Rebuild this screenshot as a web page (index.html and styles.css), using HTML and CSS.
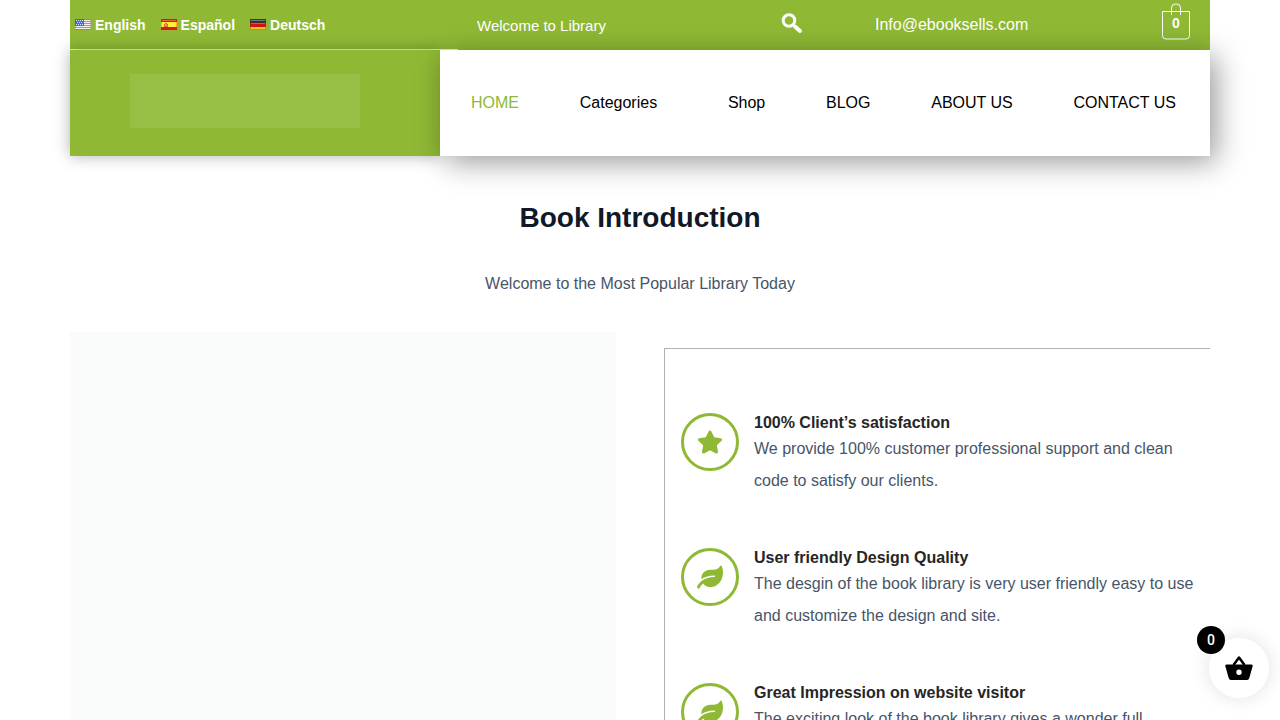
FILE: index.html
```html
<!DOCTYPE html>
<html lang="en">
<head>
<meta charset="utf-8">
<meta name="viewport" content="width=device-width, initial-scale=1">
<title>Book Library</title>
<link rel="stylesheet" href="styles.css">
</head>
<body>
<div class="container">
  <header>
    <div class="topbar">
      <div class="languages">
        <a href="#"><svg class="flag" viewBox="0 0 16 11" aria-hidden="true"><path fill="#f6f0f0" d="M0 0h16v11H0z"/><path stroke="#e57c7c" d="M0 .5h16M0 2.500h16M0 4.500h16M0 6.500h16M0 8.500h16M0 10.500h16"/><path fill="#3e6fd8" d="M0 0h9v7H0z"/><path stroke="#dbe6ff" stroke-dasharray="1 1" d="M1 1.500h7M2 3.500h6M1 5.500h7"/><path fill="none" stroke="#555" stroke-opacity=".25" d="M.5.5h15v10H.5z"/></svg>English</a>
        <a href="#"><svg class="flag" viewBox="0 0 16 11" aria-hidden="true"><path fill="#e8130c" d="M0 0h16v11H0z"/><path fill="#fff12c" d="M1 3h14v5H1z"/><path fill="#ffb52d" d="M0 3h1v5H0zM15 3h1v5h-1z"/><path fill="#d86b45" d="M3 5h1V4h2v1h1v3H3z"/><path fill="#e9c7a0" d="M4 5h1v1H4zM5 6h1v1H5z"/><path fill="#f65a4c" d="M1 1h14v1H1z"/></svg>Español</a>
        <a href="#"><svg class="flag" viewBox="0 0 16 11" aria-hidden="true"><path fill="#333" d="M0 0h16v4H0z"/><path fill="#777" d="M1 1h14v1H1z"/><path fill="#d3120e" d="M0 4h16v4H0z"/><path fill="#f04a43" d="M1 4h14v1H1z"/><path fill="#f6c12d" d="M0 8h16v3H0z"/><path fill="none" stroke="#784010" stroke-opacity=".4" d="M.5.5h15v10H.5z"/></svg>Deutsch</a>
      </div>
      <p class="welcome">Welcome to Library</p>
      <button class="search" type="button" aria-label="Search"><svg viewBox="0 0 22 22"><circle cx="8" cy="8.500" r="5.800" fill="none" stroke="#fff" stroke-width="3"/><path stroke="#fff" stroke-width="4" stroke-linecap="round" d="m14 14.500 5 4.500"/></svg></button>
      <a class="email" href="mailto:Info@ebooksells.com">Info@ebooksells.com</a>
      <a class="bag" href="#" aria-label="Cart, 0 items"><svg viewBox="0 0 28 37" fill="none" stroke="#fff" aria-hidden="true"><path d="M.5 8.500h27v24a3.500 3.500 0 0 1-3.500 3.500H4a3.500 3.500 0 0 1-3.500-3.500zM9.500 12V5a4 4 0 0 1 4-4h1a4 4 0 0 1 4 4v7"/></svg><span>0</span></a>
    </div>
    <div class="masthead">
      <div class="brand"><a class="logo" href="#" aria-label="Library home"></a></div>
      <nav class="menu">
        <a class="current" href="#">HOME</a>
        <a class="has-submenu" href="#">Categories</a>
        <a href="#">Shop</a>
        <a href="#">BLOG</a>
        <a href="#">ABOUT US</a>
        <a href="#">CONTACT US</a>
      </nav>
    </div>
  </header>
  <main>
    <h1>Book Introduction</h1>
    <p class="intro">Welcome to the Most Popular Library Today</p>
    <div class="columns">
      <div class="media"></div>
      <ul class="features">
        <li>
          <span class="icon"><svg viewBox="0 0 576 512" aria-hidden="true"><path d="M259.300 17.800 194 150.200 47.900 171.500c-26.200 3.800-36.700 36.100-17.700 54.600l105.700 103-25 145.500c-4.500 26.300 23.200 46 46.400 33.700L288 439.600l130.700 68.700c23.200 12.200 50.900-7.400 46.400-33.700l-25-145.500 105.700-103c19-18.500 8.500-50.800-17.700-54.600L382 150.200 316.700 17.800c-11.700-23.600-45.600-23.900-57.400 0z"/></svg></span>
          <div><h2>100% Client’s satisfaction</h2><p>We provide 100% customer professional support and clean code to satisfy our clients.</p></div>
        </li>
        <li>
          <span class="icon"><svg viewBox="0 0 576 512" aria-hidden="true"><path d="M546.200 9.700c-5.600-12.500-21.600-13-28.300-1.200C486.900 62.400 431.400 96 368 96h-80C182 96 96 182 96 288c0 7 .8 13.700 1.500 20.500C161.300 262.800 253.400 224 384 224c8.800 0 16 7.200 16 16s-7.200 16-16 16C132.600 256 26 410.100 2.400 468c-6.600 16.300 1.200 34.900 17.500 41.600 16.400 6.800 35-1.100 41.800-17.300 1.500-3.600 20.900-47.900 71.900-90.600 32.400 43.900 94 85.800 174.900 77.200C465.500 467.500 576 326.700 576 154.300c0-50.200-10.800-102.200-29.800-144.600z"/></svg></span>
          <div><h2>User friendly Design Quality</h2><p>The desgin of the book library is very user friendly easy to use and customize the design and site.</p></div>
        </li>
        <li>
          <span class="icon"><svg viewBox="0 0 576 512" aria-hidden="true"><path d="M546.200 9.700c-5.600-12.500-21.600-13-28.300-1.200C486.900 62.400 431.400 96 368 96h-80C182 96 96 182 96 288c0 7 .8 13.700 1.500 20.500C161.300 262.800 253.400 224 384 224c8.800 0 16 7.200 16 16s-7.200 16-16 16C132.600 256 26 410.100 2.400 468c-6.600 16.300 1.200 34.900 17.500 41.600 16.400 6.800 35-1.100 41.800-17.300 1.500-3.600 20.900-47.900 71.900-90.600 32.400 43.900 94 85.800 174.900 77.200C465.500 467.500 576 326.700 576 154.300c0-50.200-10.800-102.200-29.800-144.600z"/></svg></span>
          <div><h2>Great Impression on website visitor</h2><p>The exciting look of the book library gives a wonder full</p></div>
        </li>
      </ul>
    </div>
  </main>
</div>
<button class="cart" type="button" aria-label="Open cart">
  <svg viewBox="0 0 28 26" aria-hidden="true"><path d="m8.500 10 5.500-7.500L19.500 10" fill="none" stroke="#000" stroke-width="2.500" stroke-linejoin="round"/><path fill="#000" fill-rule="evenodd" d="M1.500 9.500h25q1.500 0 1.200 1.500l-3.400 12q-.5 2-2.300 2H6q-1.800 0-2.300-2L.3 11q-.3-1.500 1.200-1.500zM14 14.500a2.700 2.700 0 1 0 0 5.400 2.700 2.700 0 0 0 0-5.400z"/></svg>
  <span class="count">0</span>
</button>
</body>
</html>
```
FILE: styles.css
```css
* { box-sizing: border-box; }
html { scrollbar-width: none; }
body {
  margin: 0;
  overflow-x: hidden;
  background: #fff;
  color: #475569;
  font: 16px/32px "Liberation Sans", Arial, sans-serif;
}
h1, h2, p, ul { margin: 0; padding: 0; }
a { color: inherit; text-decoration: none; }
button { border: 0; padding: 0; cursor: pointer; }
svg { display: block; }

.container { max-width: 1140px; margin: 0 auto; }

.topbar {
  display: grid;
  grid-template-columns: 407px 304px 94px 1fr auto;
  align-items: center;
  height: 50px;
  padding-right: 20px;
  background: #8fb935;
  color: #fff;
}
.languages {
  display: flex;
  gap: 15px;
  align-self: end;
  height: 50px;
  width: 388px;
  padding-left: 5px;
  border-bottom: 1px solid #e8f0d8;
  font-size: 14px;
  font-weight: 700;
}
.languages a { display: flex; align-items: center; gap: 4px; }
.flag { width: 16px; height: 11px; }
.welcome { font-size: 15px; padding-top: 2px; }
.search { width: 22px; height: 22px; margin-bottom: 4px; background: none; }
.search svg { width: 22px; height: 22px; }
.bag {
  display: grid;
  width: 28px;
  height: 37px;
  margin-bottom: 7px;
  font-size: 14px;
  font-weight: 700;
}
.bag svg, .bag span { grid-area: 1 / 1; }
.bag svg { width: 28px; height: 37px; }
.bag span { padding-top: 4px; text-align: center; }

.masthead { display: flex; min-height: 106px; }
.brand {
  display: flex;
  align-items: center;
  width: 370px;
  padding: 0 60px 4px;
  background: #8fb935;
  box-shadow: 0 0 15px rgba(0, 0, 0, .3);
}
.logo { width: 230px; height: 54px; background: #97bf45; }
.menu {
  display: flex;
  flex: 1;
  align-items: center;
  justify-content: space-between;
  padding: 0 34px 0 31px;
  background: #fff;
  box-shadow: 6px 6px 28px rgba(0, 0, 0, .4);
  color: #000;
}
.menu .current { color: #8fb935; }
.menu .has-submenu { padding-right: 10px; }

h1 {
  padding-top: 44px;
  color: #111827;
  font-size: 28px;
  line-height: 36px;
  text-align: center;
}
.intro { padding: 32px 0; text-align: center; }
.columns { display: grid; grid-template-columns: 1fr 1fr; gap: 48px; }
.media { background: #fafcfb; }
.features {
  display: flex;
  flex-direction: column;
  gap: 51px;
  margin-top: 16px;
  padding: 64px 16px;
  border: 1px solid #b0b0b0;
  border-width: 1px 0 0 1px;
  list-style: none;
}
.features li { display: flex; gap: 15px; }
.features h2 { color: #262626; font-size: 16px; line-height: 20px; }
.features p { line-height: 32px; }
.icon {
  display: flex;
  flex: none;
  align-items: center;
  justify-content: center;
  width: 58px;
  height: 58px;
  border: 3px solid #8fb935;
  border-radius: 50%;
}
.icon svg { width: 26px; height: 24px; fill: #8fb935; }

.cart {
  position: fixed;
  right: 11px;
  bottom: 22px;
  display: flex;
  align-items: center;
  justify-content: center;
  width: 60px;
  height: 60px;
  border-radius: 50%;
  background: #fff;
  box-shadow: 0 0 20px rgba(0, 0, 0, .12);
}
.cart svg { width: 28px; height: 26px; }
.count {
  position: absolute;
  top: -12px;
  left: -12px;
  width: 28px;
  height: 28px;
  border-radius: 50%;
  background: #000;
  color: #fff;
  font: 500 14px/28px Roboto, sans-serif;
}
```
